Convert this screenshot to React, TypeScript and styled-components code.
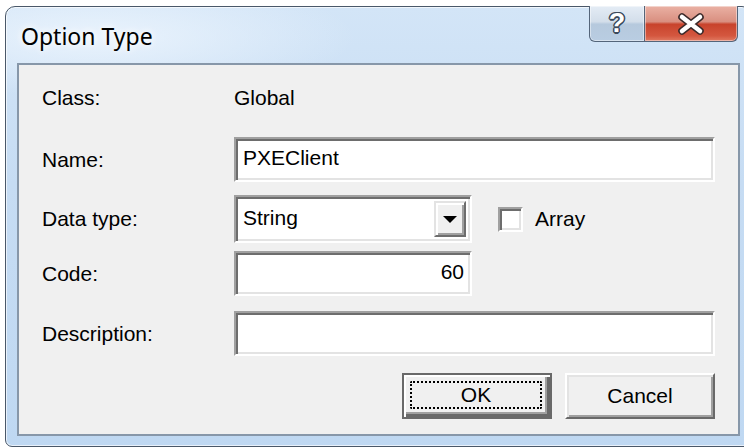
import React from "react";
import styled, { createGlobalStyle } from "styled-components";

const GlobalStyle = createGlobalStyle`
  html, body {
    margin: 0;
    padding: 0;
    background: #ffffff;
    overflow: hidden;
  }
  body {
    width: 744px;
    height: 448px;
    font-family: "Liberation Sans", Arial, sans-serif;
  }
`;

const Window = styled.div`
  margin: 6px 0 0 5px;
  width: 747px;
  height: 441px;
  box-sizing: border-box;
  border: 1px solid #4a5869;
  border-radius: 10px 10px 7px 7px;
  background:
    radial-gradient(ellipse 260px 60px at 90px 30px, rgba(235, 244, 253, 0.95), rgba(235, 244, 253, 0) 100%),
    linear-gradient(180deg, #d3e5f7 0%, #c6dcf3 40%, #bfd8f2 100%);
  box-shadow: inset 0 0 0 1px rgba(255, 255, 255, 0.65);
  display: flex;
  flex-direction: column;
  padding: 0 11px 10px 11px;
`;

const TitleBar = styled.div`
  height: 56px;
  display: flex;
  align-items: flex-start;
`;

const Title = styled.div`
  font-family: "Noto Sans", "Open Sans", sans-serif;
  font-size: 23px;
  color: #000;
  margin: 13px 0 0 4px;
  text-shadow: 0 0 10px rgba(255, 255, 255, 1), 0 0 6px rgba(255, 255, 255, 0.9);
  flex: 1;
`;

const CaptionButtons = styled.div`
  display: flex;
  margin-top: -1px;
  margin-right: 2px;
`;

const CaptionButton = styled.div<{ $kind: "help" | "close" }>`
  height: 36px;
  box-sizing: border-box;
  display: flex;
  align-items: center;
  justify-content: center;
  border: 1px solid #54657a;
  border-top: none;
  width: ${(p) => (p.$kind === "help" ? "56px" : "93px")};
  border-radius: ${(p) => (p.$kind === "help" ? "0 0 0 6px" : "0 0 6px 0")};
  border-left-width: ${(p) => (p.$kind === "help" ? "1px" : "0")};
  background: ${(p) =>
    p.$kind === "help"
      ? "linear-gradient(180deg, #e4ecf5 0%, #d3deea 45%, #b6c9dd 52%, #b9cde2 100%)"
      : "linear-gradient(180deg, #eab1a4 0%, #d98f80 45%, #c8432c 52%, #d4573f 85%, #e07a62 100%)"};
  box-shadow: inset 0 0 0 1px rgba(255, 255, 255, 0.45);
`;

const HelpGlyph = styled.span`
  font-family: "Liberation Sans", Arial, sans-serif;
  font-weight: 700;
  font-size: 27px;
  color: #ffffff;
  line-height: 1;
  margin-top: 0px;
  text-shadow: 1.5px 0 0 #3c4a5c, -1.5px 0 0 #3c4a5c, 0 1.5px 0 #3c4a5c, 0 -1.5px 0 #3c4a5c,
    1px 1px 0 #3c4a5c, -1px -1px 0 #3c4a5c, 1px -1px 0 #3c4a5c, -1px 1px 0 #3c4a5c;
`;

const Client = styled.div`
  flex: 1;
  border: 2px solid #8797a9;
  background: #f0f0f0;
  padding: 18px 23px 0 23px;
  display: flex;
  flex-direction: column;
  box-sizing: border-box;
`;

const Row = styled.div<{ $top: number; $h: number }>`
  display: grid;
  grid-template-columns: 192px 1fr;
  align-items: center;
  height: ${(p) => p.$h}px;
  margin-top: ${(p) => p.$top}px;
`;

const Label = styled.span`
  font-size: 21px;
  color: #000;
`;

const Value = styled.span`
  font-size: 21px;
  color: #000;
`;

const sunken = `
  box-sizing: border-box;
  border: 2px solid;
  border-color: #a0a0a0 #ffffff #ffffff #a0a0a0;
  box-shadow: inset 2px 2px 0 #6d6d6d, inset -2px -2px 0 #e3e3e3;
  background: #ffffff;
`;

const TextBox = styled.div<{ $w?: number; $align?: "left" | "right" }>`
  ${sunken}
  height: 45px;
  width: ${(p) => (p.$w ? `${p.$w}px` : "100%")};
  display: flex;
  align-items: center;
  justify-content: ${(p) => (p.$align === "right" ? "flex-end" : "flex-start")};
  padding: 0 6px 4px 7px;
  font-size: 21px;
  color: #000;
`;

const SelectRow = styled.div`
  display: flex;
  align-items: center;
`;

const Select = styled.div`
  ${sunken}
  width: 238px;
  height: 48px;
  display: flex;
  align-items: stretch;
  padding: 4px;
`;

const SelectText = styled.span`
  flex: 1;
  display: flex;
  align-items: center;
  padding-left: 3px;
  padding-bottom: 2px;
  font-size: 21px;
  color: #000;
`;

const DropButton = styled.div`
  width: 32px;
  box-sizing: border-box;
  background: #f0f0f0;
  border: 2px solid;
  border-color: #e3e3e3 #6d6d6d #6d6d6d #e3e3e3;
  box-shadow: inset 2px 2px 0 #ffffff, inset -2px -2px 0 #a0a0a0;
  display: flex;
  align-items: center;
  justify-content: center;
`;

const Arrow = styled.div`
  width: 0;
  height: 0;
  border-left: 7px solid transparent;
  border-right: 7px solid transparent;
  border-top: 7px solid #000;
`;

const CheckLabel = styled.label`
  display: flex;
  align-items: center;
  margin-left: 26px;
  gap: 12px;
  font-size: 21px;
  color: #000;
`;

const CheckBox = styled.span`
  ${sunken}
  width: 25px;
  height: 25px;
  display: inline-block;
`;

const ButtonRow = styled.div`
  display: flex;
  justify-content: flex-end;
  gap: 13px;
  margin-top: 17px;
`;

const Button = styled.div<{ $default?: boolean }>`
  width: 150px;
  height: 46px;
  box-sizing: border-box;
  background: #f0f0f0;
  display: flex;
  align-items: center;
  justify-content: center;
  font-size: 21px;
  color: #000;
  position: relative;
  border: 2px solid;
  border-color: ${(p) => (p.$default ? "#696969" : "#ffffff #696969 #696969 #ffffff")};
  box-shadow: ${(p) =>
    p.$default
      ? "inset 2px 2px 0 #ffffff, inset -3px -3px 0 #696969, inset -5px -5px 0 #a0a0a0"
      : "inset 2px 2px 0 #e3e3e3, inset -2px -2px 0 #a0a0a0"};
`;

const FocusRect = styled.div`
  position: absolute;
  left: 6px;
  top: 6px;
  right: 8px;
  bottom: 8px;
  border: 2px dotted #000;
  border-radius: 2px;
  display: flex;
  align-items: center;
  justify-content: center;
`;

export default function App() {
  return (
    <>
      <GlobalStyle />
      <Window>
        <TitleBar>
          <Title>Option Type</Title>
          <CaptionButtons>
            <CaptionButton $kind="help">
              <HelpGlyph>?</HelpGlyph>
            </CaptionButton>
            <CaptionButton $kind="close">
              <svg width="30" height="24" viewBox="0 0 30 24">
                <path d="M6 5 L24 19 M24 5 L6 19" stroke="#3b2a2a" strokeWidth="7.5" strokeLinecap="round" />
                <path d="M6 5 L24 19 M24 5 L6 19" stroke="#ffffff" strokeWidth="4.5" strokeLinecap="round" />
              </svg>
            </CaptionButton>
          </CaptionButtons>
        </TitleBar>
        <Client>
          <Row $top={0} $h={30}>
            <Label>Class:</Label>
            <Value>Global</Value>
          </Row>
          <Row $top={24} $h={45}>
            <Label>Name:</Label>
            <TextBox>PXEClient</TextBox>
          </Row>
          <Row $top={13} $h={48}>
            <Label>Data type:</Label>
            <SelectRow>
              <Select>
                <SelectText>String</SelectText>
                <DropButton>
                  <Arrow />
                </DropButton>
              </Select>
              <CheckLabel>
                <CheckBox />
                Array
              </CheckLabel>
            </SelectRow>
          </Row>
          <Row $top={8} $h={45}>
            <Label>Code:</Label>
            <TextBox $w={238} $align="right">60</TextBox>
          </Row>
          <Row $top={15} $h={45}>
            <Label>Description:</Label>
            <TextBox />
          </Row>
          <ButtonRow>
            <Button $default>
              <FocusRect>OK</FocusRect>
            </Button>
            <Button>Cancel</Button>
          </ButtonRow>
        </Client>
      </Window>
    </>
  );
}
